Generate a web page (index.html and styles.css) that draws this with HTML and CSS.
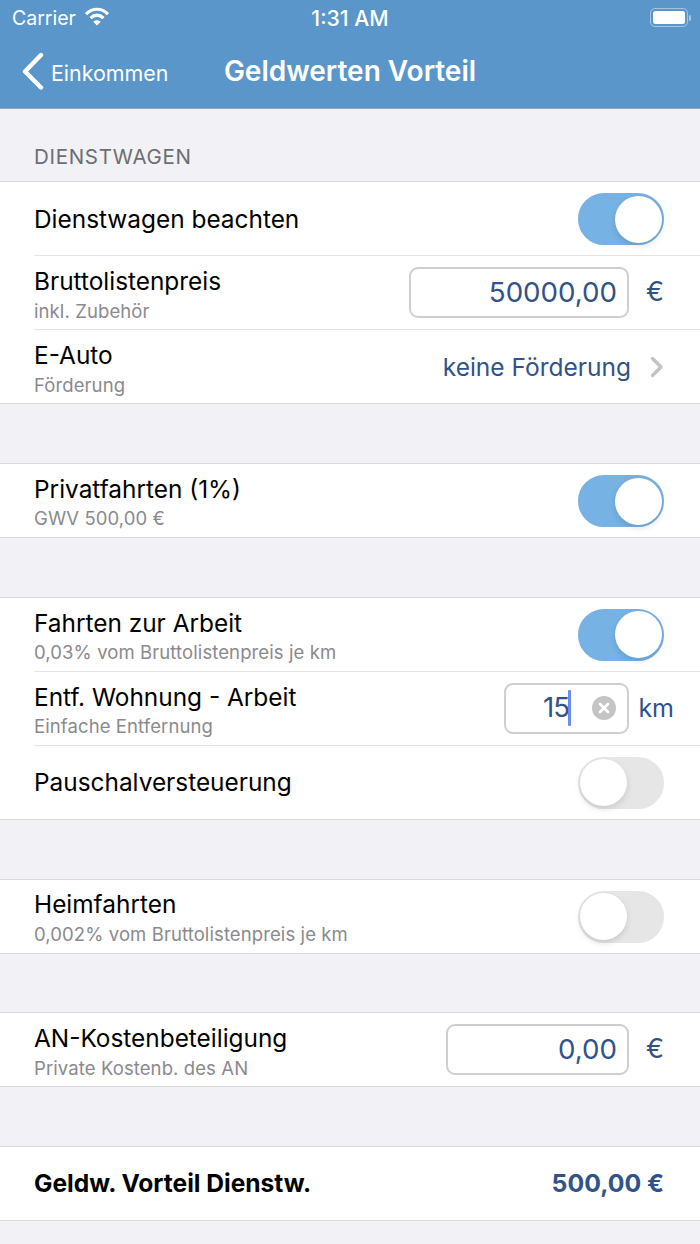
FILE: index.html
```html
<!DOCTYPE html>
<html lang="de">
<head>
<meta charset="utf-8">
<title>Geldwerten Vorteil</title>
<link rel="stylesheet" href="styles.css">
</head>
<body>
<header class="nav">
  <div class="status">
    <div class="status-left">
      <span>Carrier</span>
      <svg class="wifi" width="26" height="20" viewBox="0 0 26 20"><path d="M2 8.200C8.500 1.600 17.500 1.600 24 8.200" class="wifi-arc"/><path d="M6.500 12.200C10.600 8.200 15.400 8.200 19.500 12.200" class="wifi-arc"/><path d="M13 19.500 9.300 15.700C11.500 13.700 14.500 13.700 16.700 15.700Z" class="wifi-dot"/></svg>
    </div>
    <span class="clock">1:31 AM</span>
    <div class="battery"><div class="battery-body"><div class="battery-fill"></div></div><div class="battery-cap"></div></div>
  </div>
  <div class="bar">
    <div class="back">
      <svg width="24" height="38" viewBox="0 0 24 38"><path d="M21 3 5 19.500 21 35.500" class="chev"/></svg>
      <span>Einkommen</span>
    </div>
    <h1 class="title">Geldwerten Vorteil</h1>
  </div>
</header>
<main>
  <div class="section-label">DIENSTWAGEN</div>
  <section class="group">
    <div class="row"><div class="labels"><div class="main">Dienstwagen beachten</div></div><div class="switch on"><div class="knob"></div></div></div>
    <div class="row"><div class="labels"><div class="main">Bruttolistenpreis</div><div class="sub">inkl. Zubehör</div></div><div class="field w220">50000,00</div><span class="unit">€</span></div>
    <div class="row"><div class="labels"><div class="main">E-Auto</div><div class="sub">Förderung</div></div><span class="value">keine Förderung</span><svg class="disc" width="14" height="22" viewBox="0 0 14 22"><path d="M2.500 2.500 11 11 2.500 19.500"/></svg></div>
  </section>
  <section class="group">
    <div class="row"><div class="labels"><div class="main">Privatfahrten (1%)</div><div class="sub">GWV 500,00 €</div></div><div class="switch on"><div class="knob"></div></div></div>
  </section>
  <section class="group">
    <div class="row"><div class="labels"><div class="main">Fahrten zur Arbeit</div><div class="sub">0,03% vom Bruttolistenpreis je km</div></div><div class="switch on"><div class="knob"></div></div></div>
    <div class="row"><div class="labels"><div class="main">Entf. Wohnung - Arbeit</div><div class="sub">Einfache Entfernung</div></div><div class="field edit"><span class="typed">15</span><span class="caret"></span><svg class="clear" width="24" height="24" viewBox="0 0 24 24"><circle cx="12" cy="12" r="12"/><path d="M8 8 16 16M16 8 8 16"/></svg></div><span class="unit km">km</span></div>
    <div class="row"><div class="labels"><div class="main">Pauschalversteuerung</div></div><div class="switch"><div class="knob"></div></div></div>
  </section>
  <section class="group">
    <div class="row"><div class="labels"><div class="main">Heimfahrten</div><div class="sub">0,002% vom Bruttolistenpreis je km</div></div><div class="switch"><div class="knob"></div></div></div>
  </section>
  <section class="group">
    <div class="row"><div class="labels"><div class="main">AN-Kostenbeteiligung</div><div class="sub">Private Kostenb. des AN</div></div><div class="field w183">0,00</div><span class="unit">€</span></div>
  </section>
  <section class="group">
    <div class="row"><div class="labels"><div class="main strong">Geldw. Vorteil Dienstw.</div></div><span class="value strong-value">500,00 €</span></div>
  </section>
</main>
</body>
</html>
```
FILE: styles.css
```css
* { box-sizing: border-box; }
html, body { margin: 0; height: 100%; }
body {
  width: 700px;
  height: 1244px;
  overflow: hidden;
  background: #f1f1f6;
  font-family: Inter, "Liberation Sans", sans-serif;
  color: #000;
}
.nav {
  height: 109px;
  background: #5a96ca;
  border-bottom: 1px solid #9aa8bd;
  color: #fff;
}
.status {
  height: 36px;
  padding: 0 9px 0 12px;
  display: grid;
  grid-template-columns: 1fr auto 1fr;
  align-items: center;
  font-size: 20px;
}
.status-left { display: flex; align-items: center; gap: 8px; font-size: 19.500px; }
.wifi { margin-top: -5px; }
.wifi-arc { fill: none; stroke: #fff; stroke-width: 3.200; }
.wifi-dot { fill: #fff; }
.clock { font-weight: 500; font-size: 21.200px; margin-left: -3px; }
.battery { justify-self: end; display: flex; align-items: center; gap: 1px; margin-top: -1px; }
.battery-body {
  width: 38px;
  height: 19px;
  border: 1.500px solid rgba(255,255,255,.45);
  border-radius: 5px;
  padding: 2px;
}
.battery-fill { height: 100%; background: #fff; border-radius: 2.500px; }
.battery-cap { width: 2px; height: 6px; background: rgba(255,255,255,.5); border-radius: 0 2px 2px 0; }
.bar { height: 72px; position: relative; display: flex; align-items: center; justify-content: center; }
.back {
  position: absolute;
  left: 20px;
  top: 16px;
  display: flex;
  align-items: center;
  gap: 7px;
  font-size: 21.400px;
}
.back span { margin-top: 3px; }
.chev { fill: none; stroke: #fff; stroke-width: 4.400; stroke-linecap: round; stroke-linejoin: round; }
.title { margin: -3px 0 0; text-align: center; font-size: 28px; font-weight: 600; }
.section-label {
  height: 72.300px;
  padding: 36px 0 0 34px;
  font-size: 20.500px;
  letter-spacing: 0.700px;
  color: #6d6d72;
  line-height: 24px;
}
.group { background: #fff; border-top: 1px solid #d9d9dc; border-bottom: 1px solid #d9d9dc; margin-bottom: 58.800px; }
.row {
  height: 74px;
  margin-left: 34px;
  border-bottom: 1px solid #e4e4e6;
  padding: 0 36px 0 0;
  display: flex;
  align-items: center;
}
.row:last-child { height: 73px; border-bottom: 0; }
.labels { flex: 1; min-width: 0; }
.main { font-size: 24.400px; line-height: 30px; }
.sub { font-size: 18.500px; letter-spacing: 0.100px; line-height: 24px; color: #8a8a8e; margin: 2px 0 -4px; padding-top: 0.500px; padding-bottom: 1px; }
.strong { font-size: 24.560px; font-weight: 700; margin-top: -2px; }
.switch {
  width: 86px;
  height: 52px;
  margin-top: 1px;
  border-radius: 26px;
  background: #e6e6e6;
  border: 2px solid #e6e6e6;
  display: flex;
  justify-content: flex-start;
  align-items: center;
  flex: none;
}
.switch.on { background: #77b2e4; border-color: #77b2e4; justify-content: flex-end; }
.knob {
  width: 47px;
  height: 47px;
  border-radius: 50%;
  background: #fff;
  box-shadow: 0 3px 6px rgba(0,0,0,.12);
}
.field {
  height: 51px;
  margin-right: -1px;
  border: 2px solid #cfcfcf;
  border-radius: 9px;
  background: #fff;
  color: #32528a;
  font-size: 27.700px;
  display: flex;
  align-items: center;
  justify-content: flex-end;
  padding: 0 10px 2px 0;
  flex: none;
}
.w220 { width: 220px; }
.w183 { width: 183px; }
.edit { width: 125px; padding: 0 11px 0 0; }
.typed { letter-spacing: -1px; margin-bottom: 2px; }
.caret { width: 3px; height: 36px; background: #6c8cf0; border-radius: 1px; margin: 0 21px 0 -1px; }
.clear { flex: none; }
.clear circle { fill: #c4c4c4; }
.clear path { stroke: #fff; stroke-width: 2.600; stroke-linecap: round; }
.unit { color: #32528a; font-size: 27px; width: 36px; text-align: right; flex: none; margin-bottom: 2px; }
.unit.km { width: 46px; margin-right: -10px; font-size: 25px; margin-bottom: 0; }
.value { color: #32528a; font-size: 24.500px; margin-top: 1px; }
.disc { margin-left: 19px; margin-top: 1px; flex: none; }
.disc path { fill: none; stroke: #c4c4c8; stroke-width: 3.400; stroke-linecap: round; stroke-linejoin: round; }
.strong-value { font-weight: 700; font-size: 24.800px; margin-top: -2px; }
```
